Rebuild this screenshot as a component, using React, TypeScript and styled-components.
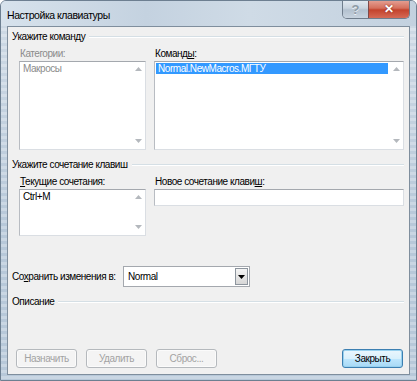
import styled, { createGlobalStyle } from "styled-components";

const GlobalStyle = createGlobalStyle`
  html, body {
    margin: 0;
    padding: 0;
    background: #ffffff;
  }

  body {
    font-family: "Liberation Sans", Arial, sans-serif;
    font-size: 10px;
    letter-spacing: -0.45px;
    color: #000000;
  }
`;

const Window = styled.div`
  box-sizing: border-box;
  width: 417px;
  height: 381px;
  display: flex;
  flex-direction: column;
  padding: 0 6px 5px 6px;
  border: 1px solid #6d7f91;
  border-radius: 6px 6px 0 0;
  background:
    linear-gradient(180deg, rgba(255, 255, 255, 0.35) 0%, rgba(255, 255, 255, 0) 60%),
    repeating-linear-gradient(180deg, #b7c8d9 0px, #b7c8d9 3px, #c9d6e3 3px, #c9d6e3 6px);
  overflow: hidden;
`;

const TitleBar = styled.div`
  height: 25px;
  display: flex;
  align-items: flex-start;
  margin: 0 -6px;
  padding: 0 6px;
  background: linear-gradient(90deg, #d7e2ec 0%, #c4d2e0 35%, #cfdbe6 60%, #c3d1df 100%);
`;

const Title = styled.span`
  margin-top: 8px;
  font-size: 10.5px;
  letter-spacing: -0.45px;
  color: #000000;
`;

const Controls = styled.div`
  display: flex;
  margin-left: auto;
  margin-top: -1px;
  border: 1px solid #6f7d8c;
  border-top: none;
  border-radius: 0 0 5px 5px;
  overflow: hidden;
`;

const CaptionButton = styled.div<{ $close?: boolean }>`
  width: ${({ $close }) => ($close ? "40px" : "25px")};
  height: 18px;
  display: flex;
  align-items: center;
  justify-content: center;
  font-weight: bold;
  font-size: ${({ $close }) => ($close ? "12px" : "13px")};
  letter-spacing: 0;
  color: ${({ $close }) => ($close ? "#ffffff" : "#8e9aa6")};
  border-left: ${({ $close }) => ($close ? "1px solid #7d4a4a" : "none")};
  background: ${({ $close }) =>
    $close
      ? "linear-gradient(180deg, #e6a397 0%, #d5705d 45%, #c3432d 55%, #d66a55 100%)"
      : "linear-gradient(180deg, #e4ebf2 0%, #c9d4df 45%, #b3c1cf 55%, #c7d3df 100%)"};
  text-shadow: ${({ $close }) => ($close ? "0 0 2px #7a1e10" : "0 1px 0 #eef2f6")};
`;

const Client = styled.div`
  flex: 1;
  display: flex;
  flex-direction: column;
  background: #f0f0f0;
  border: 1px solid #7f8e9d;
  padding: 0 6px 6px 4px;
`;

const GroupHeader = styled.div<{ $top: number }>`
  display: flex;
  align-items: center;
  gap: 4px;
  height: 14px;
  margin-top: ${({ $top }) => $top}px;
`;

const HeaderLine = styled.div`
  flex: 1;
  height: 1px;
  margin-right: -1px;
  background: #d5dfe5;
  box-shadow: 0 1px 0 #ffffff;
`;

const Columns = styled.div<{ $top: number }>`
  display: grid;
  grid-template-columns: 127px 250px;
  column-gap: 8px;
  padding-left: 7px;
  margin-top: ${({ $top }) => $top}px;
`;

const Field = styled.div`
  display: flex;
  flex-direction: column;
  gap: 1px;
`;

const Label = styled.span<{ $disabled?: boolean }>`
  height: 12px;
  line-height: 12px;
  padding-left: 1px;
  color: ${({ $disabled }) => ($disabled ? "#8b8b8b" : "#000000")};
`;

const ListBox = styled.div<{ $height: number }>`
  box-sizing: border-box;
  height: ${({ $height }) => $height}px;
  display: flex;
  background: #ffffff;
  border: 1px solid #a4a8ae;
  border-color: #a4a8ae #dadee3 #dadee3 #b8bcc2;
`;

const Items = styled.div`
  flex: 1;
  padding: 1px;
`;

const Item = styled.div<{ $selected?: boolean; $disabled?: boolean }>`
  height: 11px;
  line-height: 11px;
  padding-left: 2px;
  color: ${({ $selected, $disabled }) =>
    $selected ? "#ffffff" : $disabled ? "#8b8b8b" : "#000000"};
  background: ${({ $selected }) => ($selected ? "#3399ff" : "transparent")};
`;

const ScrollBar = styled.div`
  width: 14px;
  display: flex;
  flex-direction: column;
  justify-content: space-between;
  align-items: center;
  padding: 5px 0 6px;
`;

const Arrow = ({ down }: { down?: boolean }) => (
  <svg width="7" height="4" viewBox="0 0 7 4">
    <path d={down ? "M0 0 L7 0 L3.5 4 Z" : "M0 4 L7 4 L3.5 0 Z"} fill="#b4b8bd" />
  </svg>
);

const TextInput = styled.div`
  box-sizing: border-box;
  height: 17px;
  background: #ffffff;
  border: 1px solid #a4a8ae;
  border-color: #a4a8ae #dadee3 #dadee3 #b8bcc2;
`;

const SaveRow = styled.div`
  display: flex;
  align-items: center;
  height: 21px;
  margin-top: 30px;
`;

const SaveLabel = styled.span`
  width: 111px;
`;

const Select = styled.div`
  box-sizing: border-box;
  width: 127px;
  height: 21px;
  display: flex;
  align-items: center;
  background: #ffffff;
  border: 1px solid #a4a8ae;
  padding: 1px;
`;

const SelectValue = styled.span`
  flex: 1;
  padding-left: 3px;
`;

const DropButton = styled.div`
  box-sizing: border-box;
  width: 13px;
  height: 17px;
  display: flex;
  align-items: center;
  justify-content: center;
  border: 1px solid #8d959e;
  background: linear-gradient(180deg, #f4f4f4 0%, #e6e6e6 50%, #d6d6d6 100%);
`;

const ButtonRow = styled.div`
  display: flex;
  align-items: center;
  gap: 9px;
  margin-top: auto;
  padding-left: 4px;
`;

const Button = styled.div<{ $default?: boolean; $disabled?: boolean }>`
  box-sizing: border-box;
  width: 61px;
  height: 19px;
  display: flex;
  align-items: center;
  justify-content: center;
  border-radius: 3px;
  margin-left: ${({ $default }) => ($default ? "auto" : "0")};
  color: ${({ $disabled }) => ($disabled ? "#a3a3a3" : "#000000")};
  border: 1px solid ${({ $default }) => ($default ? "#3c7fb1" : "#b5b9bd")};
  background: ${({ $default }) =>
    $default
      ? "linear-gradient(180deg, #eaf6fd 0%, #d9f0fc 50%, #bee6fd 52%, #a7d9f5 100%)"
      : "#f4f4f4"};
  box-shadow: ${({ $default }) =>
    $default ? "inset 0 0 0 1px #98d1ef" : "inset 0 0 0 1px #fbfbfb"};
`;

export default function App() {
  return (
    <>
      <GlobalStyle />
      <Window>
        <TitleBar>
          <Title>Настройка клавиатуры</Title>
          <Controls>
            <CaptionButton>?</CaptionButton>
            <CaptionButton $close>✕</CaptionButton>
          </Controls>
        </TitleBar>

        <Client>
          <GroupHeader $top={2}>
            <span>Укажите команду</span>
            <HeaderLine />
          </GroupHeader>

          <Columns $top={5}>
            <Field>
              <Label $disabled>Категории:</Label>
              <ListBox $height={89}>
                <Items>
                  <Item $disabled>Макросы</Item>
                </Items>
                <ScrollBar>
                  <Arrow />
                  <Arrow down />
                </ScrollBar>
              </ListBox>
            </Field>
            <Field>
              <Label>
                Команд<u>ы</u>:
              </Label>
              <ListBox $height={89}>
                <Items>
                  <Item $selected>Normal.NewMacros.МГТУ</Item>
                </Items>
                <ScrollBar>
                  <Arrow />
                  <Arrow down />
                </ScrollBar>
              </ListBox>
            </Field>
          </Columns>

          <GroupHeader $top={7}>
            <span>Укажите сочетание клавиш</span>
            <HeaderLine />
          </GroupHeader>

          <Columns $top={5}>
            <Field>
              <Label>
                <u>Т</u>екущие сочетания:
              </Label>
              <ListBox $height={47}>
                <Items>
                  <Item>Ctrl+M</Item>
                </Items>
                <ScrollBar>
                  <Arrow />
                  <Arrow down />
                </ScrollBar>
              </ListBox>
            </Field>
            <Field>
              <Label>
                Новое сочетание клави<u>ш</u>:
              </Label>
              <TextInput />
            </Field>
          </Columns>

          <SaveRow>
            <SaveLabel>
              Со<u>х</u>ранить изменения в:
            </SaveLabel>
            <Select>
              <SelectValue>Normal</SelectValue>
              <DropButton>
                <svg width="7" height="4" viewBox="0 0 7 4">
                  <path d="M0 0 L7 0 L3.5 4 Z" fill="#000000" />
                </svg>
              </DropButton>
            </Select>
          </SaveRow>

          <GroupHeader $top={7}>
            <span>Описание</span>
            <HeaderLine />
          </GroupHeader>

          <ButtonRow>
            <Button $disabled>Назначить</Button>
            <Button $disabled>Удалить</Button>
            <Button $disabled>Сброс...</Button>
            <Button $default>Закрыть</Button>
          </ButtonRow>
        </Client>
      </Window>
    </>
  );
}
